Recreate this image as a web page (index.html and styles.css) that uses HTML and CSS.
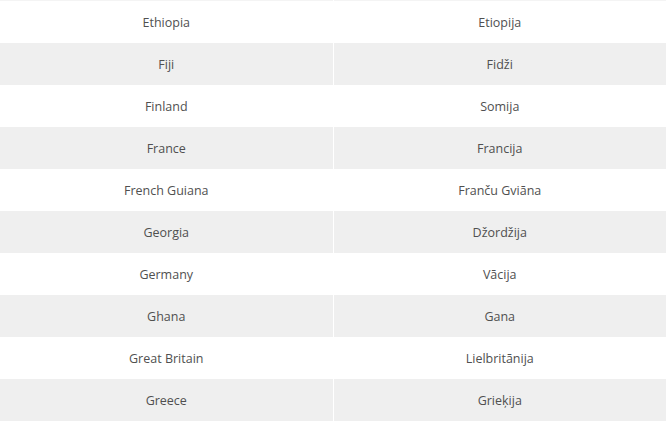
FILE: index.html
```html
<!DOCTYPE html>
<html>
<head>
<meta charset="utf-8">
<link rel="stylesheet" href="styles.css">
</head>
<body>
<table class="countries">
<tbody>
<tr><td>Ethiopia</td><td>Etiopija</td></tr>
<tr><td>Fiji</td><td>Fidži</td></tr>
<tr><td>Finland</td><td>Somija</td></tr>
<tr><td>France</td><td>Francija</td></tr>
<tr><td>French Guiana</td><td>Franču Gviāna</td></tr>
<tr><td>Georgia</td><td>Džordžija</td></tr>
<tr><td>Germany</td><td>Vācija</td></tr>
<tr><td>Ghana</td><td>Gana</td></tr>
<tr><td>Great Britain</td><td>Lielbritānija</td></tr>
<tr><td>Greece</td><td>Grieķija</td></tr>
</tbody>
</table>
</body>
</html>
```
FILE: styles.css
```css
html, body {
  margin: 0;
  padding: 0;
  background: #ffffff;
}
.countries {
  width: 666px;
  border-collapse: collapse;
  border-top: 1px solid #f4f4f4;
  font-family: "Open Sans", sans-serif;
  font-size: 12.5px;
  color: #505050;
}
.countries td {
  width: 50%;
  height: 42px;
  padding: 2px 0 0 0;
  text-align: center;
  vertical-align: middle;
  box-sizing: border-box;
  border-left: 1px solid #ffffff;
}
.countries td:first-child {
  border-left: none;
}
.countries tr:nth-child(even) td {
  background: #efefef;
}
```
